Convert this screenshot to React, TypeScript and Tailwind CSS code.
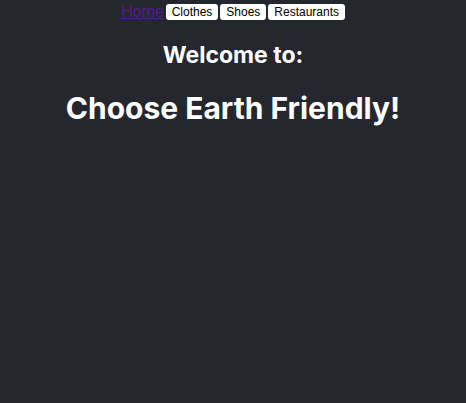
import React from "react";

export default function App() {
  return (
    <div className="min-h-[403px] bg-[#25272f] text-center font-['Inter',sans-serif] text-white">
      <nav className="flex items-start justify-center pt-[3px] font-['Liberation_Sans',Arial,sans-serif]">
        <a href="#" className="text-[16px] leading-[17px] text-[#551a8b] underline">
          Home
        </a>
        <div className="ml-[2px] mt-[1px] flex gap-[2px]">
          {["Clothes", "Shoes", "Restaurants"].map((label) => (
            <button
              key={label}
              className="rounded-[3px] bg-white px-[6px] text-[12px] leading-[16px] text-black"
            >
              {label}
            </button>
          ))}
        </div>
      </nav>
      <h2 className="mt-[21px] text-[23px] font-bold leading-[28px]">Welcome to:</h2>
      <h1 className="mt-[21px] text-[30px] font-bold leading-[36px]">Choose Earth Friendly!</h1>
    </div>
  );
}
